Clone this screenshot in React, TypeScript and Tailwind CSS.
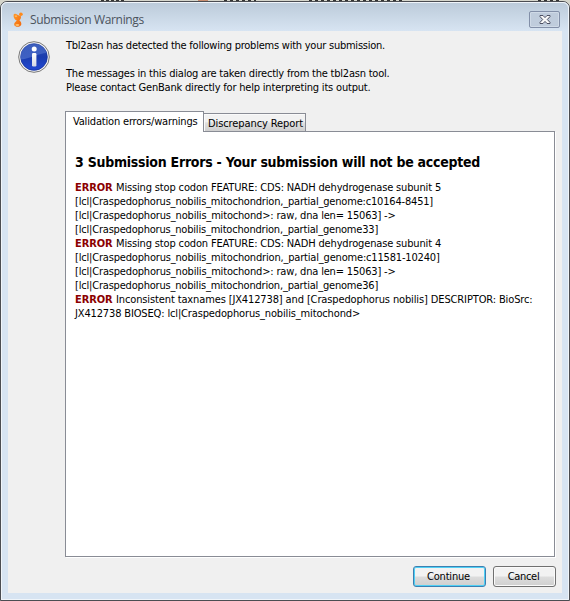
const BODY = "font-['DejaVu_Sans_Condensed','DejaVu_Sans',sans-serif] text-[11px] leading-[14px]";

function AppIcon() {
  return (
    <svg width="10" height="16" viewBox="0 0 10 16" className="shrink-0">
      <defs>
        <linearGradient id="orange" x1="0" y1="0" x2="1" y2="1">
          <stop offset="0" stopColor="#ff9a2a" />
          <stop offset="1" stopColor="#f2660c" />
        </linearGradient>
      </defs>
      <path d="M0.6 3C1 1.6 2.6 1.6 4 2.4C5.4 3.2 6.6 3.6 7.6 3.8C8.6 5.6 7.6 7.4 6.4 8.2C7.6 9.4 8.6 10.6 8.3 12.4C7.6 15.4 2.2 15.6 1.2 13C0.8 11 2.6 9.8 3.8 8.6C1.6 7.6 0.2 5.4 0.6 3Z" fill="url(#orange)" />
      <circle cx="7.9" cy="2.3" r="1.8" fill="#ff8a1a" />
      <ellipse cx="4.4" cy="13" rx="2" ry="1" fill="#ffc06a" />
      <ellipse cx="3" cy="4.2" rx="1.2" ry="0.9" fill="#ffb45a" />
    </svg>
  );
}

function InfoIcon() {
  return (
    <svg width="32" height="32" viewBox="1 1 32 32" className="shrink-0">
      <defs>
        <linearGradient id="blue" x1="0" y1="0" x2="0" y2="1">
          <stop offset="0" stopColor="#2b50b4" />
          <stop offset="0.5" stopColor="#1a3cae" />
          <stop offset="1" stopColor="#2148d4" />
        </linearGradient>
        <linearGradient id="gloss" x1="0" y1="0" x2="0" y2="1">
          <stop offset="0" stopColor="#7f9be0" stopOpacity="0.2" />
          <stop offset="1" stopColor="#6f92e0" stopOpacity="0.45" />
        </linearGradient>
        <linearGradient id="stem" x1="0" y1="0" x2="0" y2="1">
          <stop offset="0" stopColor="#ffffff" />
          <stop offset="1" stopColor="#d4d8e4" />
        </linearGradient>
      </defs>
      <circle cx="17" cy="17" r="15.3" fill="#f4f4f4" stroke="#777777" strokeWidth="1" />
      <circle cx="17" cy="17" r="13.3" fill="url(#blue)" stroke="#17339c" strokeWidth="0.8" />
      <path d="M3.9 19.5A13.2 13.2 0 0 1 29.6 13C24 12.5 14 18.5 3.9 19.5Z" fill="url(#gloss)" />
      <circle cx="17.2" cy="8.9" r="2.5" fill="#fff" />
      <rect x="15" y="13" width="4.4" height="13.4" rx="1.2" fill="url(#stem)" />
    </svg>
  );
}

function CloseIcon() {
  return (
    <svg width="12" height="9" viewBox="0 0 12 9">
      <path d="M1 .5H4L6 2.6L8 .5H11V1.6L8.3 4.5L11 7.4V8.5H8L6 6.4L4 8.5H1V7.4L3.7 4.5L1 1.6Z" fill="#fafafa" stroke="#4d5063" />
    </svg>
  );
}

function ErrorLabel() {
  return <b className="mr-[3.5px] inline-block w-[37.5px] tracking-[-0.1px] text-[#8b0000]">ERROR</b>;
}

export default function App() {
  return (
    <div className="flex h-[601px] w-[570px] flex-col overflow-hidden bg-[#d6d6cc]">
      <div className="relative h-px w-full shrink-0 overflow-hidden">
        <div className="absolute left-[101px] top-0 h-px w-6 bg-[repeating-linear-gradient(90deg,#333_0_3px,#d6d6cc_3px_5px)]" />
        <div className="absolute left-[198px] top-0 h-px w-[10px] bg-[#c98e70]" />
        <div className="absolute left-[224px] top-0 h-px w-8 bg-[repeating-linear-gradient(90deg,#333_0_3px,#d6d6cc_3px_6px)]" />
        <div className="absolute left-[309px] top-0 h-px w-[94px] bg-[repeating-linear-gradient(90deg,#333_0_3px,#d6d6cc_3px_6px)]" />
        <div className="absolute left-[538px] top-0 h-px w-6 bg-[repeating-linear-gradient(90deg,#333_0_3px,#d6d6cc_3px_6px)]" />
      </div>
      <div className="flex h-[600px] flex-col rounded-t-[7px] border border-[#4b4d52] bg-[#d7e4f2]">
        <div className="flex min-h-0 grow flex-col rounded-t-[6px] border border-[#f0f5fa] bg-[linear-gradient(#bccbda_0px,#d7e4f2_28px)] px-[6px] pb-[6px]">
          <div className="flex h-[28px] shrink-0 items-start justify-between">
            <div className="flex items-center gap-[7px] pl-[5px] pt-[8px]">
              <AppIcon />
              <span className="whitespace-nowrap pt-px font-['Open_Sans','Noto_Sans',sans-serif] text-[12px] leading-4 tracking-[-0.33px] text-[#4b535d]">Submission Warnings</span>
            </div>
            <div className="mr-[2px] mt-[8px] flex h-[17px] w-[31px] items-center justify-center rounded-[2px] border border-[#828fa8] bg-[#bfccdc] shadow-[inset_0_0_0_1px_#cfdae7]">
              <CloseIcon />
            </div>
          </div>
          <div className={`flex min-h-0 grow flex-col bg-[#f0f0f0] text-black ${BODY}`}>
            <div className="flex h-[72px] shrink-0 pl-[10px]">
              <div className="pt-[10px]"><InfoIcon /></div>
              <div className="whitespace-nowrap pl-[16px] pt-[8px]">
                <p className="tracking-[-0.234px]">Tbl2asn has detected the following problems with your submission.</p>
                <p className="mt-[14px] tracking-[-0.213px]">The messages in this dialog are taken directly from the tbl2asn tool.</p>
                <p className="tracking-[-0.194px]">Please contact GenBank directly for help interpreting its output.</p>
              </div>
            </div>
            <div className="z-10 ml-[57px] mt-[8px] flex h-[20px] items-end whitespace-nowrap">
              <div className="-mb-px h-[21px] w-[139px] border border-b-0 border-[#898c95] bg-white pl-[7px] pt-[3px] tracking-[-0.177px]">Validation errors/warnings</div>
              <div className="h-[18px] w-[102px] border border-b-0 border-l-0 border-[#898c95] bg-[linear-gradient(#f2f2f2_0_45%,#e0e0e0_52%,#cfcfcf)] pl-[4px] pt-[3px] tracking-[-0.094px] shadow-[inset_1px_1px_0_#fafafa]">Discrepancy Report</div>
            </div>
            <div className="ml-[57px] h-[426px] w-[490px] shrink-0 whitespace-nowrap border border-[#898c95] bg-white pl-[9px] pt-[22px] shadow-[1px_1px_0_#fff]">
              <h1 className="text-[14px] font-bold leading-[17px] tracking-[-0.26px]">3 Submission Errors - Your submission will not be accepted</h1>
              <div className="mt-[10px]">
                <p className="tracking-[-0.152px]"><ErrorLabel />Missing stop codon FEATURE: CDS: NADH dehydrogenase subunit 5</p>
                <p className="tracking-[-0.186px]">[lcl|Craspedophorus_nobilis_mitochondrion,_partial_genome:c10164-8451]</p>
                <p className="tracking-[-0.176px]">[lcl|Craspedophorus_nobilis_mitochond&gt;: raw, dna len= 15063] -&gt;</p>
                <p className="tracking-[-0.193px]">[lcl|Craspedophorus_nobilis_mitochondrion,_partial_genome33]</p>
                <p className="tracking-[-0.152px]"><ErrorLabel />Missing stop codon FEATURE: CDS: NADH dehydrogenase subunit 4</p>
                <p className="tracking-[-0.18px]">[lcl|Craspedophorus_nobilis_mitochondrion,_partial_genome:c11581-10240]</p>
                <p className="tracking-[-0.176px]">[lcl|Craspedophorus_nobilis_mitochond&gt;: raw, dna len= 15063] -&gt;</p>
                <p className="tracking-[-0.193px]">[lcl|Craspedophorus_nobilis_mitochondrion,_partial_genome36]</p>
                <p className="tracking-[-0.126px]"><ErrorLabel />Inconsistent taxnames [JX412738] and [Craspedophorus nobilis] DESCRIPTOR: BioSrc:</p>
                <p className="tracking-[-0.148px]">JX412738 BIOSEQ: lcl|Craspedophorus_nobilis_mitochond&gt;</p>
              </div>
            </div>
            <div className="flex justify-end gap-[7px] pr-[6px] pt-[9px]">
              <button className="h-[21px] w-[73px] rounded-[3px] border border-[#3c7fb1] bg-[linear-gradient(#f2f2f2_0_48%,#dcdcdc_52%,#cfcfcf)] pr-[2px] tracking-[-0.19px] shadow-[inset_0_0_0_1px_#4fd0f5]">Continue</button>
              <button className="h-[21px] w-[63px] rounded-[3px] border border-[#707070] bg-[linear-gradient(#f2f2f2_0_48%,#dddddd_52%,#cfcfcf)] pr-[2px] tracking-[-0.3px] shadow-[inset_0_0_0_1px_#fafafa]">Cancel</button>
            </div>
          </div>
        </div>
      </div>
    </div>
  );
}
